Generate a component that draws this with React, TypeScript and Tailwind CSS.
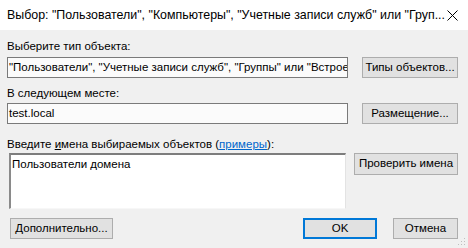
import React from "react";

const font = { fontFamily: '"Liberation Sans", Arial, sans-serif' };

const Btn: React.FC<{ w: string; h?: string; primary?: boolean; children: React.ReactNode }> = ({
  w,
  h = "h-[21px]",
  primary,
  children,
}) => (
  <div
    className={`${w} ${h} shrink-0 flex items-center justify-center bg-[#e1e1e1] text-[11.5px] text-black whitespace-nowrap ${
      primary ? "border-2 border-[#0078d7]" : "border border-[#adadad]"
    }`}
  >
    {children}
  </div>
);

const App: React.FC = () => {
  return (
    <div className="w-[468px] h-[248px] bg-[#f0f0f0] flex flex-col overflow-hidden relative" style={font}>
      {/* Title bar */}
      <div className="h-[30px] bg-white flex items-center justify-between pl-[7px] pr-[10px] shrink-0">
        <span className="text-[12.4px] text-black whitespace-nowrap">
          Выбор: "Пользователи", "Компьютеры", "Учетные записи служб" или "Груп...
        </span>
        <svg width="11" height="11" viewBox="0 0 11 11" className="shrink-0">
          <path d="M0.5 0.5L10.5 10.5M10.5 0.5L0.5 10.5" stroke="#000" strokeWidth="1" />
        </svg>
      </div>

      <div className="flex flex-col pl-[7px] text-[11.5px] text-black">
        <div className="mt-[9px] h-[14px] leading-[14px]">Выберите тип объекта:</div>
        <div className="mt-[4px] flex items-start gap-[14px]">
          <div className="w-[341px] h-[21px] border border-[#7a7a7a] bg-[#fbfbfb] overflow-hidden whitespace-nowrap pl-[1px] leading-[19px]">
            "Пользователи", "Учетные записи служб", "Группы" или "Встроенные"
          </div>
          <Btn w="w-[96px]">Типы объектов...</Btn>
        </div>

        <div className="mt-[8px] h-[14px] leading-[14px]">В следующем месте:</div>
        <div className="mt-[3px] flex items-start gap-[14px]">
          <div className="w-[341px] h-[21px] border border-[#7a7a7a] bg-[#fbfbfb] overflow-hidden whitespace-nowrap pl-[1px] leading-[19px]">
            test.local
          </div>
          <Btn w="w-[96px]">Размещение...</Btn>
        </div>

        <div className="mt-[13px] h-[14px] leading-[14px] whitespace-nowrap">
          Введите <span className="underline">и</span>мена выбираемых объектов (
          <span className="text-[#0066cc] underline">примеры</span>):
        </div>
        <div className="mt-[2px] flex items-start pl-[2px] gap-[8px]">
          <div className="w-[337px] h-[56px] bg-white border-t-2 border-l-2 border-t-[#7d7d7d] border-l-[#8a8a8a] border-r border-b border-r-[#e3e3e3] border-b-[#f7f7f7] pl-[1px] pt-[2px] leading-[14px]">
            Пользователи домена
          </div>
          <Btn w="w-[104px]" h="h-[22px]">Проверить имена</Btn>
        </div>

        <div className="mt-[9px] flex items-start pl-[3px] pr-[10px]">
          <Btn w="w-[103px]">Дополнительно...</Btn>
          <div className="flex-1" />
          <Btn w="w-[74px]" primary>
            OK
          </Btn>
          <div className="w-[16px]" />
          <Btn w="w-[65px]">Отмена</Btn>
        </div>
      </div>

      {/* Resize grip */}
      <svg width="8" height="8" viewBox="0 0 8 8" className="absolute right-[2px] bottom-[2px]">
        <rect x="6" y="0" width="1" height="1" fill="#bfbfbf" />
        <rect x="3" y="3" width="1" height="1" fill="#bfbfbf" />
        <rect x="6" y="3" width="1" height="1" fill="#bfbfbf" />
        <rect x="0" y="6" width="1" height="1" fill="#bfbfbf" />
        <rect x="3" y="6" width="1" height="1" fill="#bfbfbf" />
        <rect x="6" y="6" width="1" height="1" fill="#bfbfbf" />
      </svg>
    </div>
  );
};

export default App;
